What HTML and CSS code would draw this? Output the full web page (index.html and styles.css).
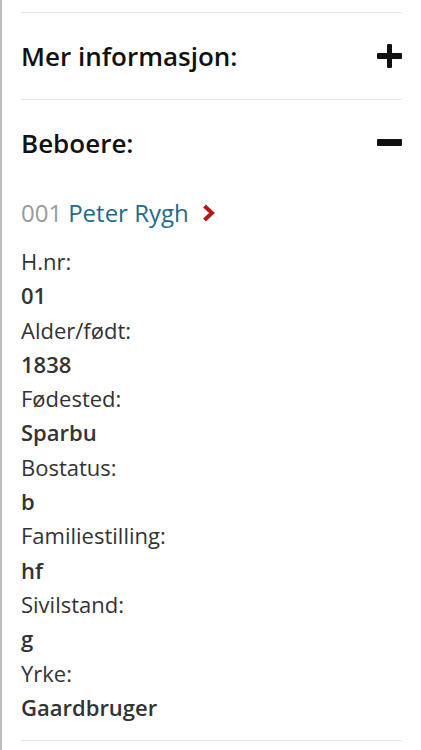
FILE: index.html
```html
<!DOCTYPE html>
<html lang="no">
<head>
  <meta charset="UTF-8">
  <meta name="viewport" content="width=device-width, initial-scale=1.0">
  <title>Beboere</title>
  <link rel="stylesheet" href="styles.css">
</head>
<body>
<div class="panel">

  <!-- Collapsed section -->
  <div class="section">
    <div class="section-head">
      <h2>Mer informasjon:</h2>
      <span class="toggle plus"></span>
    </div>
  </div>

  <!-- Open section with residents -->
  <div class="section">
    <div class="section-head">
      <h2>Beboere:</h2>
      <span class="toggle minus"></span>
    </div>

    <div class="person">
      <p class="person-name">
        <span class="num">001</span>
        <a href="#">Peter Rygh</a>
        <svg class="chevron" width="13" height="18" viewBox="0 0 13 18">
          <path d="M2.5 2 L10 9 L2.5 16" fill="none" stroke="#b3191c" stroke-width="4"/>
        </svg>
      </p>
      <dl class="facts">
        <dt>H.nr:</dt><dd>01</dd>
        <dt>Alder/født:</dt><dd>1838</dd>
        <dt>Fødested:</dt><dd>Sparbu</dd>
        <dt>Bostatus:</dt><dd>b</dd>
        <dt>Familiestilling:</dt><dd>hf</dd>
        <dt>Sivilstand:</dt><dd>g</dd>
        <dt>Yrke:</dt><dd>Gaardbruger</dd>
      </dl>
    </div>
  </div>

</div>
</body>
</html>
```

FILE: styles.css
```css
body {
  margin: 0;
  font-family: "Open Sans", "Liberation Sans", sans-serif;
  color: #333;
  background-color: #fff;
}

/* Page column with the grey rule on the left */
.panel {
  border-left: 2px solid #bdbdbd;
  padding: 12px 19px 0 19px;
  min-height: 750px;
  box-sizing: border-box;
}

.section {
  border-top: 1px solid #e6e6e6;
}

.section-head {
  display: flex;
  justify-content: space-between;
  align-items: center;
  height: 86px;
}

.section-head h2 {
  margin: 0;
  font-size: 26px;
  font-weight: 600;
  color: #111;
}

/* Plus / minus toggles */
.toggle {
  position: relative;
  width: 25px;
  height: 24px;
}
.toggle::before,
.toggle::after {
  content: "";
  position: absolute;
  background-color: #111;
  border-radius: 1px;
}
.toggle::before {
  left: 0;
  right: 0;
  top: 9px;
  height: 6px;
}
.plus::after {
  top: 0;
  bottom: 0;
  left: 10px;
  width: 5px;
}
.minus::before {
  top: 8px;
  height: 7px;
}
.minus::after {
  display: none;
}

/* Resident entry */
.person {
  padding: 10px 0 16px;
  border-bottom: 1px solid #e6e6e6;
}

.person-name {
  margin: 0 0 14px;
  font-size: 24px;
  line-height: 34px;
  display: flex;
  align-items: center;
  gap: 6px;
}
.person-name .num {
  color: #9a9a9a;
}
.person-name a {
  color: #1f6a8c;
  text-decoration: none;
}
.chevron {
  margin-left: 7px;
}

.facts {
  margin: 0;
  font-size: 22px;
  line-height: 34.3px;
}
.facts dt {
  color: #333;
}
.facts dd {
  margin: 0;
  font-weight: 600;
}
```
